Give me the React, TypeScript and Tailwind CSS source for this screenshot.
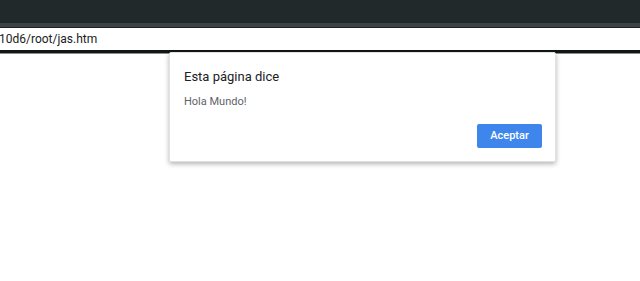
export default function App() {
  return (
    <div className="relative h-[281px] w-[640px] overflow-hidden bg-white font-['Roboto',sans-serif]">
      <div className="h-[23px] bg-[#22292b]" />
      <div className="h-[4px] bg-[#3b4446]" />
      <div className="h-[1px] bg-[#1c2224]" />
      <div className="flex h-[22px] items-center bg-white text-[12px] text-[#202124]">
        <span className="-ml-[1px]">10d6/root/jas.htm</span>
      </div>
      <div className="h-[3px] bg-[#111516]" />
      <div className="h-[1px] bg-[#8a8f90]" />

      <div className="absolute left-[169px] top-[52px] flex h-[110px] w-[387px] flex-col rounded-[2px] border border-[#e2e2e2] bg-white shadow-[0_2px_5px_rgba(0,0,0,0.3)]">
        <div className="pl-[14px] pt-[14px] text-[13px] text-[#202124]">Esta página dice</div>
        <div className="pl-[14px] pt-[7px] text-[11px] text-[#5f6368]">Hola Mundo!</div>
        <div className="flex flex-1 items-end justify-end pb-[13px] pr-[13px]">
          <button
            type="button"
            className="h-[24px] w-[65px] rounded-[2px] bg-[#3f86ec] text-[11px] font-medium text-white"
          >
            Aceptar
          </button>
        </div>
      </div>
    </div>
  )
}
